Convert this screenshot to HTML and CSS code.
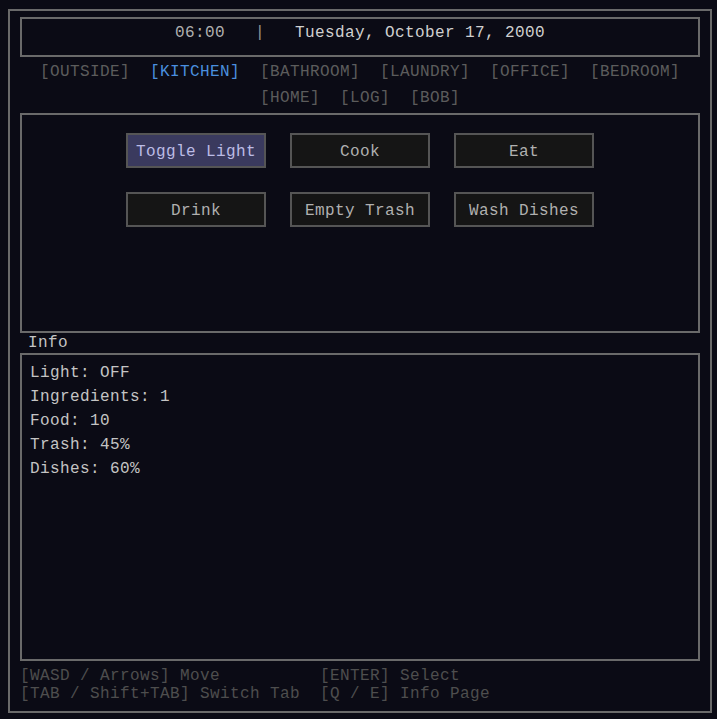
FILE: index.html
```html
<!DOCTYPE html>
<html lang="en">
<head>
<meta charset="utf-8">
<title>Kitchen</title>
<link rel="stylesheet" href="styles.css">
</head>
<body>
<div class="frame">
  <div class="header"><span class="time">06:00</span><span class="sep">   |   </span><span class="date">Tuesday, October 17, 2000</span></div>
  <nav class="tabs">
    <span class="tab">[OUTSIDE]</span>
    <span class="tab active">[KITCHEN]</span>
    <span class="tab">[BATHROOM]</span>
    <span class="tab">[LAUNDRY]</span>
    <span class="tab">[OFFICE]</span>
    <span class="tab">[BEDROOM]</span>
    <span class="tab">[HOME]</span>
    <span class="tab">[LOG]</span>
    <span class="tab">[BOB]</span>
  </nav>
  <div class="actions">
    <div class="grid">
      <div class="btn selected">Toggle Light</div>
      <div class="btn">Cook</div>
      <div class="btn">Eat</div>
      <div class="btn">Drink</div>
      <div class="btn">Empty Trash</div>
      <div class="btn">Wash Dishes</div>
    </div>
  </div>
  <div class="label">Info</div>
  <div class="info">
    <div class="line">Light: OFF</div>
    <div class="line">Ingredients: 1</div>
    <div class="line">Food: 10</div>
    <div class="line">Trash: 45%</div>
    <div class="line">Dishes: 60%</div>
  </div>
  <div class="help">
    <span>[WASD / Arrows] Move</span><span>[ENTER] Select</span>
    <span>[TAB / Shift+TAB] Switch Tab</span><span>[Q / E] Info Page</span>
  </div>
</div>
</body>
</html>
```
FILE: styles.css
```css
* { box-sizing: border-box; }
html, body { background: #0b0b15; }
body {
  margin: 0;
  padding: 9px 0 0 8px;
  font-family: "Courier New", "Nimbus Mono PS", "Nimbus Mono L", "FreeMono", "Liberation Mono", monospace;
  font-size: 16px;
  letter-spacing: 0.4px;
  color: #c0c0c0;
}
.frame {
  width: 704px;
  height: 704px;
  border: 2px solid #6a6a6a;
  padding: 6px 10px 8px;
  display: flex;
  flex-direction: column;
}
.header {
  height: 40px;
  border: 2px solid #6a6a6a;
  padding-top: 4px;
  line-height: 20px;
  text-align: center;
  white-space: pre;
}
.time { color: #b0b0b0; }
.sep { color: #969696; }
.date { color: #d0d0d0; }
.tabs {
  height: 56px;
  padding: 2px 0;
  display: flex;
  flex-wrap: wrap;
  justify-content: center;
  column-gap: 20px;
  line-height: 26px;
}
.tab { color: #5c5c5c; white-space: pre; }
.tab.active { color: #4a8fdf; }
.actions {
  height: 220px;
  border: 2px solid #6a6a6a;
  padding-top: 18px;
}
.grid {
  display: grid;
  grid-template-columns: repeat(3, 140px);
  column-gap: 24px;
  row-gap: 24px;
  justify-content: center;
}
.btn {
  height: 35px;
  border: 2px solid #555;
  background: #151515;
  color: #b0b0b0;
  text-align: center;
  padding-top: 2px;
  line-height: 31px;
  white-space: pre;
}
.btn.selected {
  background: #3a3a5e;
  color: #bcbce6;
}
.label {
  height: 20px;
  line-height: 20px;
  padding-left: 8px;
  color: #c4c4c4;
}
.info {
  height: 308px;
  border: 2px solid #6a6a6a;
  padding: 6px 8px;
  line-height: 24px;
  color: #c4c4c4;
}
.help {
  margin-top: 6px;
  display: grid;
  grid-template-columns: 300px auto;
  line-height: 18px;
  color: #4e4e4e;
  white-space: pre;
}
```
